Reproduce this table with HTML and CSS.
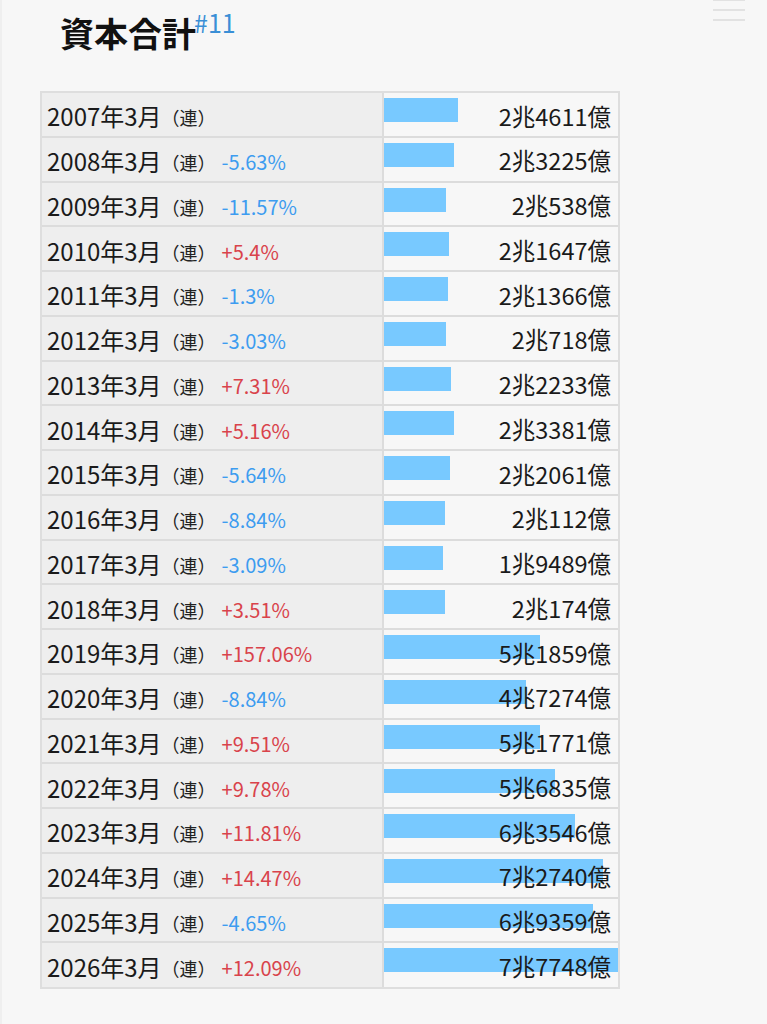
FILE: index.html
```html
<!DOCTYPE html>
<html lang="ja">
<head>
<meta charset="utf-8">
<title>資本合計</title>
<link rel="stylesheet" href="styles.css">
</head>
<body>
<div class="page">
  <button class="menu" aria-label="menu"><span></span><span></span><span></span></button>
  <h1 class="title">資本合計<sup class="num">#11</sup></h1>
  <div class="table">
    <div class="row"><div class="label"><span class="year">2007年3月</span><span class="ren">（連）</span></div><div class="value"><div class="bar" style="width:31.65%"></div><span class="amt">2兆4611億</span></div></div>
    <div class="row"><div class="label"><span class="year">2008年3月</span><span class="ren">（連）</span><span class="pct down">-5.63%</span></div><div class="value"><div class="bar" style="width:29.87%"></div><span class="amt">2兆3225億</span></div></div>
    <div class="row"><div class="label"><span class="year">2009年3月</span><span class="ren">（連）</span><span class="pct down">-11.57%</span></div><div class="value"><div class="bar" style="width:26.42%"></div><span class="amt">2兆538億</span></div></div>
    <div class="row"><div class="label"><span class="year">2010年3月</span><span class="ren">（連）</span><span class="pct up">+5.4%</span></div><div class="value"><div class="bar" style="width:27.84%"></div><span class="amt">2兆1647億</span></div></div>
    <div class="row"><div class="label"><span class="year">2011年3月</span><span class="ren">（連）</span><span class="pct down">-1.3%</span></div><div class="value"><div class="bar" style="width:27.48%"></div><span class="amt">2兆1366億</span></div></div>
    <div class="row"><div class="label"><span class="year">2012年3月</span><span class="ren">（連）</span><span class="pct down">-3.03%</span></div><div class="value"><div class="bar" style="width:26.65%"></div><span class="amt">2兆718億</span></div></div>
    <div class="row"><div class="label"><span class="year">2013年3月</span><span class="ren">（連）</span><span class="pct up">+7.31%</span></div><div class="value"><div class="bar" style="width:28.60%"></div><span class="amt">2兆2233億</span></div></div>
    <div class="row"><div class="label"><span class="year">2014年3月</span><span class="ren">（連）</span><span class="pct up">+5.16%</span></div><div class="value"><div class="bar" style="width:30.07%"></div><span class="amt">2兆3381億</span></div></div>
    <div class="row"><div class="label"><span class="year">2015年3月</span><span class="ren">（連）</span><span class="pct down">-5.64%</span></div><div class="value"><div class="bar" style="width:28.38%"></div><span class="amt">2兆2061億</span></div></div>
    <div class="row"><div class="label"><span class="year">2016年3月</span><span class="ren">（連）</span><span class="pct down">-8.84%</span></div><div class="value"><div class="bar" style="width:25.87%"></div><span class="amt">2兆112億</span></div></div>
    <div class="row"><div class="label"><span class="year">2017年3月</span><span class="ren">（連）</span><span class="pct down">-3.09%</span></div><div class="value"><div class="bar" style="width:25.07%"></div><span class="amt">1兆9489億</span></div></div>
    <div class="row"><div class="label"><span class="year">2018年3月</span><span class="ren">（連）</span><span class="pct up">+3.51%</span></div><div class="value"><div class="bar" style="width:25.95%"></div><span class="amt">2兆174億</span></div></div>
    <div class="row"><div class="label"><span class="year">2019年3月</span><span class="ren">（連）</span><span class="pct up">+157.06%</span></div><div class="value"><div class="bar" style="width:66.70%"></div><span class="amt">5兆1859億</span></div></div>
    <div class="row"><div class="label"><span class="year">2020年3月</span><span class="ren">（連）</span><span class="pct down">-8.84%</span></div><div class="value"><div class="bar" style="width:60.80%"></div><span class="amt">4兆7274億</span></div></div>
    <div class="row"><div class="label"><span class="year">2021年3月</span><span class="ren">（連）</span><span class="pct up">+9.51%</span></div><div class="value"><div class="bar" style="width:66.59%"></div><span class="amt">5兆1771億</span></div></div>
    <div class="row"><div class="label"><span class="year">2022年3月</span><span class="ren">（連）</span><span class="pct up">+9.78%</span></div><div class="value"><div class="bar" style="width:73.10%"></div><span class="amt">5兆6835億</span></div></div>
    <div class="row"><div class="label"><span class="year">2023年3月</span><span class="ren">（連）</span><span class="pct up">+11.81%</span></div><div class="value"><div class="bar" style="width:81.73%"></div><span class="amt">6兆3546億</span></div></div>
    <div class="row"><div class="label"><span class="year">2024年3月</span><span class="ren">（連）</span><span class="pct up">+14.47%</span></div><div class="value"><div class="bar" style="width:93.56%"></div><span class="amt">7兆2740億</span></div></div>
    <div class="row"><div class="label"><span class="year">2025年3月</span><span class="ren">（連）</span><span class="pct down">-4.65%</span></div><div class="value"><div class="bar" style="width:89.21%"></div><span class="amt">6兆9359億</span></div></div>
    <div class="row"><div class="label"><span class="year">2026年3月</span><span class="ren">（連）</span><span class="pct up">+12.09%</span></div><div class="value"><div class="bar" style="width:100%"></div><span class="amt">7兆7748億</span></div></div>
  </div>
</div>
</body>
</html>
```

FILE: styles.css
```css
html, body {
  margin: 0;
  padding: 0;
  background: #f7f7f7;
}
body {
  font-family: "Noto Sans CJK JP", "Noto Sans", sans-serif;
  color: #1a1a1a;
}
.page {
  position: relative;
  min-height: 1024px;
  border-left: 2px solid #efefef;
  box-sizing: border-box;
  padding: 10px 0 0 38px;
}
.menu {
  position: absolute;
  top: -1px;
  right: 22px;
  width: 32px;
  height: 22px;
  padding: 0;
  border: 0;
  background: transparent;
  display: flex;
  flex-direction: column;
  justify-content: space-between;
}
.menu span {
  display: block;
  height: 2px;
  background: #e2e2e2;
}
.title {
  margin: 0 0 0 20px;
  font-size: 34px;
  font-weight: 700;
  line-height: 46px;
  height: 46px;
  color: #111;
}
.num {
  font-size: 25px;
  font-weight: 400;
  color: #3a8fd6;
  vertical-align: 14px;
  line-height: 0;
  margin-left: -2px;
}
.table {
  margin-top: 35px;
  width: 580px;
  border: 2px solid #dedede;
  box-sizing: border-box;
}
.row {
  display: flex;
  height: 44.75px;
  box-sizing: border-box;
  border-bottom: 2px solid #dcdcdc;
}
.row:last-child {
  border-bottom: 0;
  height: 43.5px;
}
.label {
  width: 342px;
  background: #eeeeee;
  border-right: 2px solid #dcdcdc;
  display: flex;
  align-items: center;
  padding-left: 5px;
  box-sizing: border-box;
}
.year {
  font-size: 24px;
  line-height: 1;
  padding-top: 4px;
}
.ren {
  font-size: 18px;
  line-height: 1;
  padding-top: 6px;
  color: #222;
}
.pct {
  font-size: 20px;
  line-height: 1;
  padding-top: 6px;
  margin-left: 6px;
}
.down { color: #3d9cf0; }
.up { color: #d9434b; }
.value {
  flex: 1;
  display: grid;
  grid-template-areas: "cell";
  background: #f7f7f7;
}
.bar {
  grid-area: cell;
  align-self: start;
  margin-top: 5px;
  height: 24px;
  background: #78c9ff;
}
.amt {
  grid-area: cell;
  justify-self: end;
  align-self: center;
  font-size: 23.5px;
  line-height: 1;
  padding-top: 4px;
  padding-right: 7px;
}
```
